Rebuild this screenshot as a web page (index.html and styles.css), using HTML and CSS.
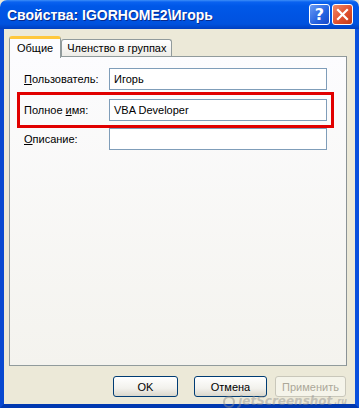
FILE: index.html
```html
<!DOCTYPE html>
<html lang="ru">
<head>
    <meta charset="UTF-8">
    <title>Свойства: IGORHOME2\Игорь</title>
    <link rel="stylesheet" href="styles.css">
</head>
<body>

    <div class="window">
        <!-- Title bar -->
        <div class="titlebar">
            <span class="title">Свойства: IGORHOME2\Игорь</span>
            <span class="tb-btn help">?</span>
            <span class="tb-btn close">
                <svg width="13" height="13" viewBox="0 0 13 13">
                    <path d="M2 2 L11 11 M11 2 L2 11" stroke="#fff" stroke-width="2.2" stroke-linecap="square"/>
                </svg>
            </span>
        </div>

        <div class="frame">
            <!-- Tabs -->
            <div class="tabs">
                <div class="tab active">Общие</div>
                <div class="tab">Членство в группах</div>
            </div>

            <div class="panel">
                <div class="row">
                    <label><u>П</u>ользователь:</label>
                    <div class="field">Игорь</div>
                </div>

                <div class="highlight">
                    <div class="row">
                        <label>Полное <u>и</u>мя:</label>
                        <div class="field">VBA Developer</div>
                    </div>
                </div>

                <div class="row">
                    <label><u>О</u>писание:</label>
                    <div class="field"></div>
                </div>
            </div>

            <!-- Dialog buttons -->
            <div class="buttons">
                <button class="btn ok">OK</button>
                <button class="btn cancel">Отмена</button>
                <button class="btn apply" disabled>Применить</button>
            </div>

            <div class="watermark">
                <svg width="14" height="12" viewBox="0 0 14 12">
                    <circle cx="7" cy="6" r="5" fill="none" stroke="rgba(140,140,140,0.5)" stroke-width="2"/>
                </svg>
                jetScreenshot<small>.ru</small>
            </div>
        </div>
    </div>

</body>
</html>
```

FILE: styles.css
```css
body {
    margin: 0;
    font-family: "Liberation Sans", Arial, sans-serif;
    font-size: 11px;
    background-color: #ECE9D8;
}

.window {
    width: 359px;
    height: 408px;
    display: flex;
    flex-direction: column;
}

.titlebar {
    height: 29px;
    display: flex;
    align-items: center;
    padding: 0 6px 0 7px;
    border-radius: 7px 7px 0 0;
    background: linear-gradient(#3D8EF7 0, #0A62F0 2px, #0058E8 6px, #0054E3 16px, #0052DE 24px, #003FC0 29px);
}

.title {
    flex: 1;
    color: white;
    font-family: "Liberation Sans", Arial, sans-serif;
    font-weight: bold;
    font-size: 14px;
    text-shadow: 1px 1px 0 #0A2A8A;
    padding-top: 1px;
}

.tb-btn {
    width: 21px;
    height: 21px;
    box-sizing: border-box;
    border: 1px solid white;
    border-radius: 3px;
    display: flex;
    align-items: center;
    justify-content: center;
    color: white;
    margin-left: 2px;
}

.help {
    background: linear-gradient(135deg, #6A9CF5, #2462E0 60%, #1848C8);
    font-family: "DejaVu Sans", sans-serif;
    font-weight: bold;
    font-size: 16px;
}

.close {
    background: linear-gradient(135deg, #F08A6A, #E0502F 55%, #C23A18);
}

.frame {
    flex: 1;
    display: flex;
    flex-direction: column;
    border: 4px solid #0A50DD;
    border-top: 0;
    border-left-color: #0848D0;
    border-bottom-color: #0038B0;
    padding: 7px 8px 7px 5px;
    position: relative;
}

.tabs {
    display: flex;
    align-items: flex-end;
    height: 21px;
    margin-bottom: -1px;
}

.tab {
    height: 17px;
    padding: 0 5px;
    border: 1px solid #919B9C;
    border-bottom: 0;
    border-radius: 3px 3px 0 0;
    background: linear-gradient(#FFFFFF, #ECEBE6);
    line-height: 17px;
    color: black;
}

.tab.active {
    height: 19px;
    padding: 0 7px;
    margin-bottom: -1px;
    border-top: 3px solid #FFC83C;
    background: #FCFCFE;
    position: relative;
    z-index: 1;
    line-height: 18px;
}

.panel {
    flex: 1;
    border: 1px solid #919B9C;
    border-right-color: #8A9295;
    background: linear-gradient(#FCFCFE, #F4F3EE);
    padding-top: 11px;
    display: flex;
    flex-direction: column;
}

.row {
    display: flex;
    align-items: center;
    height: 22px;
    padding-left: 14px;
}

.row label {
    width: 85px;
}

.field {
    width: 218px;
    height: 22px;
    box-sizing: border-box;
    border: 1px solid #7F9DB9;
    background: white;
    padding-left: 4px;
    line-height: 20px;
}

.highlight {
    margin: 2px 12px 0 7px;
    border: 3px solid #E10000;
    padding: 4px 0;
}

.highlight .row {
    padding-left: 4px;
}

.buttons {
    display: flex;
    justify-content: flex-end;
    margin-top: 10px;
    padding-right: 1px;
}

.btn {
    height: 21px;
    font-family: "Liberation Sans", Arial, sans-serif;
    font-size: 11px;
    border: 1px solid #003C74;
    border-radius: 3px;
    background: linear-gradient(#FFFFFF, #F2F1EC 60%, #DAD7CC);
    color: black;
    padding: 0;
}

.ok {
    width: 65px;
    margin-right: 16px;
}

.cancel {
    width: 73px;
    margin-right: 8px;
}

.apply {
    width: 71px;
    border-color: #C9C7BA;
    background: #F5F4EA;
    color: #ACA899;
}

.watermark {
    position: absolute;
    right: 8px;
    bottom: -4px;
    display: flex;
    align-items: center;
    gap: 2px;
    font-family: "DejaVu Sans", sans-serif;
    font-style: italic;
    font-weight: bold;
    font-size: 12px;
    line-height: 13px;
    color: rgba(140, 140, 140, 0.45);
}

.watermark small {
    font-size: 8px;
}
```
